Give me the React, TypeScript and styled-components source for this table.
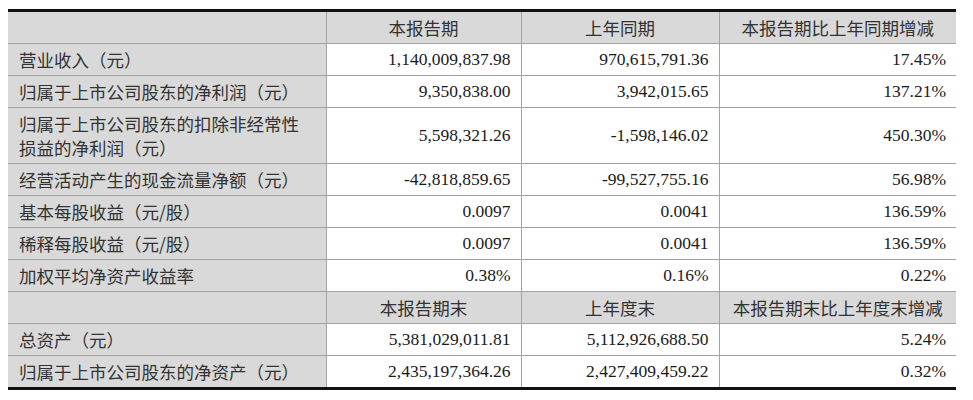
import React from "react";
import styled, { createGlobalStyle } from "styled-components";

const GlobalStyle = createGlobalStyle`
  body {
    margin: 0;
    background: #ffffff;
  }
`;

const Page = styled.div`
  padding: 9px 0 0 8px;
`;

const Table = styled.table`
  width: 948px;
  border-collapse: collapse;
  table-layout: fixed;
  border-top: 3px solid #111;
  border-bottom: 3px solid #111;
  font-size: 17.5px;
  color: #222;
`;

const Cell = styled.td`
  height: 31px;
  padding: 0 10px 0 11px;
  border-bottom: 1px solid #a3a3a3;
  border-left: 1px solid #a3a3a3;
  white-space: nowrap;
  &:first-child {
    border-left: none;
  }
`;

const HeadCell = styled(Cell)<{ $shaded?: boolean }>`
  background: #d9d9d9;
  text-align: center;
  font-family: "Noto Sans CJK SC", "Liberation Sans", sans-serif;
  color: #333;
  padding: 0 4px;
`;

const LabelCell = styled(Cell)<{ $tall?: boolean }>`
  background: #d9d9d9;
  font-family: "Noto Sans CJK SC", "Liberation Sans", sans-serif;
  color: #333;
  line-height: 24px;
  white-space: normal;
  height: ${(p) => (p.$tall ? "55px" : "31px")};
`;

const ValueCell = styled(Cell)`
  text-align: right;
  font-family: "Liberation Serif", "Times New Roman", serif;
  color: #1a1a1a;
`;

type Row = { label: React.ReactNode; values: string[]; tall?: boolean };

const periodRows: Row[] = [
  { label: "营业收入（元）", values: ["1,140,009,837.98", "970,615,791.36", "17.45%"] },
  { label: "归属于上市公司股东的净利润（元）", values: ["9,350,838.00", "3,942,015.65", "137.21%"] },
  {
    label: (
      <>
        归属于上市公司股东的扣除非经常性
        <br />
        损益的净利润（元）
      </>
    ),
    values: ["5,598,321.26", "-1,598,146.02", "450.30%"],
    tall: true,
  },
  { label: "经营活动产生的现金流量净额（元）", values: ["-42,818,859.65", "-99,527,755.16", "56.98%"] },
  { label: "基本每股收益（元/股）", values: ["0.0097", "0.0041", "136.59%"] },
  { label: "稀释每股收益（元/股）", values: ["0.0097", "0.0041", "136.59%"] },
  { label: "加权平均净资产收益率", values: ["0.38%", "0.16%", "0.22%"] },
];

const endRows: Row[] = [
  { label: "总资产（元）", values: ["5,381,029,011.81", "5,112,926,688.50", "5.24%"] },
  { label: "归属于上市公司股东的净资产（元）", values: ["2,435,197,364.26", "2,427,409,459.22", "0.32%"] },
];

const renderRows = (rows: Row[]) =>
  rows.map((row, i) => (
    <tr key={i}>
      <LabelCell $tall={row.tall}>{row.label}</LabelCell>
      {row.values.map((v, j) => (
        <ValueCell key={j}>{v}</ValueCell>
      ))}
    </tr>
  ));

const App: React.FC = () => {
  return (
    <Page>
      <GlobalStyle />
      <Table>
        <colgroup>
          <col style={{ width: 318 }} />
          <col style={{ width: 195 }} />
          <col style={{ width: 198 }} />
          <col style={{ width: 237 }} />
        </colgroup>
        <tbody>
          <tr>
            <HeadCell />
            <HeadCell>本报告期</HeadCell>
            <HeadCell>上年同期</HeadCell>
            <HeadCell>本报告期比上年同期增减</HeadCell>
          </tr>
          {renderRows(periodRows)}
          <tr>
            <HeadCell />
            <HeadCell>本报告期末</HeadCell>
            <HeadCell>上年度末</HeadCell>
            <HeadCell>本报告期末比上年度末增减</HeadCell>
          </tr>
          {renderRows(endRows)}
        </tbody>
      </Table>
    </Page>
  );
};

export default App;
